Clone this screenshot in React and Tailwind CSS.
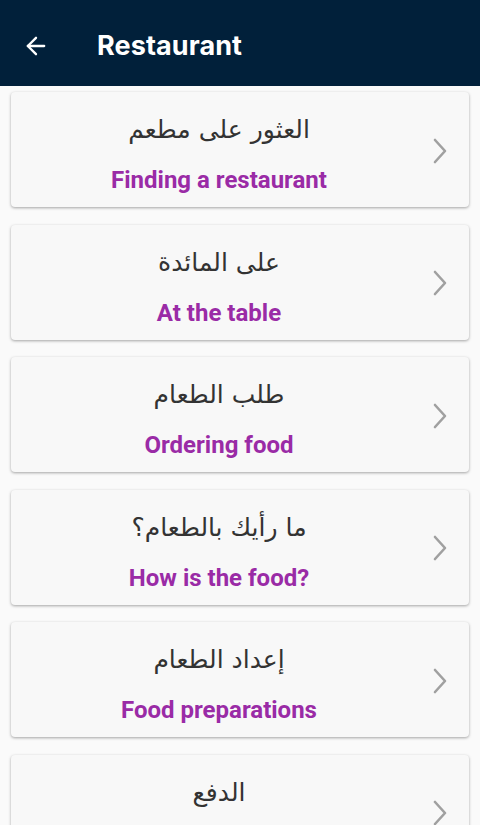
import { ArrowLeft } from 'lucide-react'

const ITEMS = [
  { ar: 'العثور على مطعم', en: 'Finding a restaurant' },
  { ar: 'على المائدة', en: 'At the table' },
  { ar: 'طلب الطعام', en: 'Ordering food' },
  { ar: 'ما رأيك بالطعام؟', en: 'How is the food?' },
  { ar: 'إعداد الطعام', en: 'Food preparations' },
  { ar: 'الدفع', en: 'Paying' },
]

export default function App() {
  return (
    <div className="h-[825px] w-[480px] overflow-hidden bg-[#fafafa] font-['Roboto',sans-serif]">
      {/* Top bar */}
      <header className="flex h-[86px] items-center bg-[#01203a] pl-[22px] pt-[6px]">
        <ArrowLeft className="h-7 w-7 text-white" strokeWidth={2} />
        <h1 className="ml-[47px] font-['Inter',sans-serif] text-[27px] font-bold tracking-[0.1px] text-white">
          Restaurant
        </h1>
      </header>

      <main className="flex flex-col gap-[17.5px] px-[11px] pt-[6px]">
        {ITEMS.map(item => (
          <div
            key={item.en}
            className="flex h-[115px] shrink-0 items-center rounded-[4px] bg-[#f8f8f8] shadow-[0_1px_3px_rgba(0,0,0,0.35)]"
          >
            <div className="flex h-full flex-1 flex-col items-center pt-[21px]">
              <p dir="rtl" className="font-['DejaVu_Sans',sans-serif] text-[25px] leading-[34px] text-[#333]">
                {item.ar}
              </p>
              <p className="mt-[19px] text-[24px] font-bold leading-[28px] text-[#9a2ba6]">
                {item.en}
              </p>
            </div>
            <svg width="16" height="26" viewBox="0 0 16 26" className="mr-[21px] ml-[5px] mt-[2px]">
              <polyline points="3,2 13,13 3,24" fill="none" stroke="#a0a0a0" strokeWidth="2.6" strokeLinecap="round" strokeLinejoin="round" />
            </svg>
          </div>
        ))}
      </main>
    </div>
  )
}
